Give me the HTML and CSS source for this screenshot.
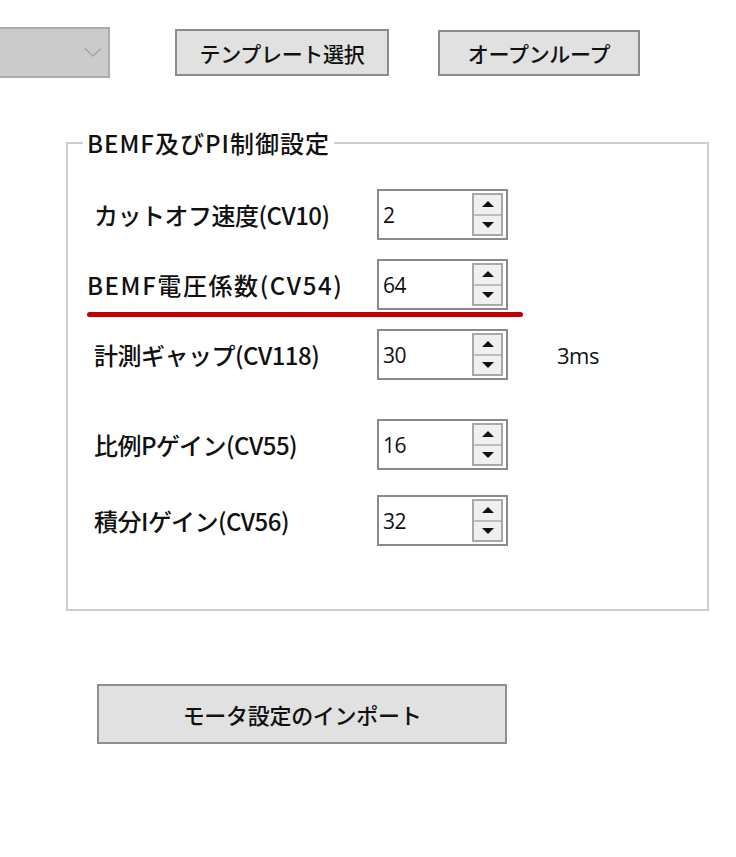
FILE: index.html
```html
<!DOCTYPE html>
<html lang="ja">
<head>
<meta charset="utf-8">
<link rel="stylesheet" href="styles.css">
</head>
<body>
<div class="page">
  <div class="toolbar">
    <div class="combo">
      <svg class="chev" width="18" height="11" viewBox="0 0 18 11"><path d="M1 1.5 L9 9 L17 1.5" fill="none" stroke="#a4a4a4" stroke-width="1.5"/></svg>
    </div>
    <div class="btn btn-tpl">テンプレート選択</div>
    <div class="btn btn-open">オープンループ</div>
  </div>

  <fieldset class="group">
    <legend class="legend">BEMF及びPI制御設定</legend>
    <div class="row r1">
      <span class="label">カットオフ速度(CV10)</span>
      <div class="spin"><span class="val">2</span><div class="arrows"><span class="up"></span><span class="down"></span></div></div>
    </div>
    <div class="row r2">
      <span class="label lb-b">BEMF電圧係数(CV54)</span>
      <div class="spin"><span class="val">64</span><div class="arrows"><span class="up"></span><span class="down"></span></div></div>
    </div>
    <div class="redline"></div>
    <div class="row r3">
      <span class="label">計測ギャップ(CV118)</span>
      <div class="spin"><span class="val">30</span><div class="arrows"><span class="up"></span><span class="down"></span></div></div>
      <span class="unit">3ms</span>
    </div>
    <div class="row r4">
      <span class="label">比例Pゲイン(CV55)</span>
      <div class="spin"><span class="val">16</span><div class="arrows"><span class="up"></span><span class="down"></span></div></div>
    </div>
    <div class="row r5">
      <span class="label">積分Iゲイン(CV56)</span>
      <div class="spin"><span class="val">32</span><div class="arrows"><span class="up"></span><span class="down"></span></div></div>
    </div>
  </fieldset>

  <div class="import-wrap">
    <div class="btn btn-import">モータ設定のインポート</div>
  </div>
</div>
</body>
</html>
```

FILE: styles.css
```css
html, body {
  margin: 0;
  padding: 0;
  background: #ffffff;
}
body {
  font-family: "Noto Sans CJK JP", "Noto Sans", sans-serif;
  color: #111;
  width: 736px;
  height: 857px;
  overflow: hidden;
}
.page {
  padding-top: 27px;
}
.toolbar {
  display: flex;
  align-items: center;
  height: 51px;
}
.combo {
  box-sizing: border-box;
  width: 112px;
  height: 51px;
  margin-left: -2px;
  background: #cbcbcb;
  border: 2px solid #adadad;
  display: flex;
  align-items: center;
  justify-content: flex-end;
  padding-right: 6px;
}
.btn {
  box-sizing: border-box;
  background: #e1e1e1;
  border: 2px solid #8c8c8c;
  display: flex;
  align-items: center;
  justify-content: center;
  font-size: 21px;
  font-weight: 500;
  letter-spacing: -0.3px;
  color: #111;
}
.btn-tpl {
  margin-left: 65px;
  width: 214px;
  height: 47px;
}
.btn-open {
  margin-left: 49px;
  width: 202px;
  height: 46px;
}
.group {
  position: relative;
  box-sizing: border-box;
  margin: 50px 0 0 66px;
  width: 643px;
  height: 483px;
  border: 2px solid #cdcdcd;
  padding: 0;
}
.legend {
  margin-left: 15px;
  padding: 0 4px;
  font-size: 24px;
  font-weight: 500;
  line-height: 30px;
  letter-spacing: 1px;
}
.row {
  display: flex;
  align-items: center;
  height: 51px;
}
.r1 { margin-top: 31px; }
.r2 { margin-top: 19px; }
.r3 { margin-top: 19px; }
.r4 { margin-top: 39px; }
.r5 { margin-top: 25px; }
.label {
  box-sizing: border-box;
  width: 309px;
  padding-left: 26px;
  font-size: 24px;
  font-weight: 500;
  letter-spacing: -0.5px;
  white-space: nowrap;
}
.label.lb-b {
  padding-left: 19px;
  letter-spacing: 1.6px;
}
.spin {
  box-sizing: border-box;
  width: 131px;
  height: 51px;
  border: 2px solid #8a8a8a;
  background: #fff;
  display: flex;
  align-items: center;
  justify-content: space-between;
  padding: 0 3px 0 4px;
  flex-shrink: 0;
}
.val {
  font-family: "Open Sans", "Noto Sans", sans-serif;
  font-size: 21px;
  font-weight: 500;
  letter-spacing: -0.5px;
  color: #111;
}
.arrows {
  box-sizing: border-box;
  width: 31px;
  height: 43px;
  display: flex;
  flex-direction: column;
  border: 2px solid #a8a8a8;
  background: #bdbdbd;
  gap: 2px;
}
.arrows span {
  flex: 1;
  background: #f0f0f0;
  display: flex;
  align-items: center;
  justify-content: center;
}
.up::after, .down::after {
  content: "";
  width: 0;
  height: 0;
  border-left: 6px solid transparent;
  border-right: 6px solid transparent;
}
.up::after { border-bottom: 6px solid #111; }
.down::after { border-top: 6px solid #111; }
.unit {
  margin-left: 49px;
  font-family: "Open Sans", "Noto Sans", sans-serif;
  font-size: 22px;
  font-weight: 500;
  letter-spacing: -0.5px;
}
.redline {
  position: absolute;
  left: 19px;
  top: 154px;
  width: 436px;
  height: 5px;
  border-radius: 3px;
  background: #c00000;
}
.import-wrap {
  padding: 73px 0 0 97px;
}
.btn-import {
  width: 410px;
  height: 60px;
  border-color: #8f8f8f;
  font-size: 22px;
}
```
